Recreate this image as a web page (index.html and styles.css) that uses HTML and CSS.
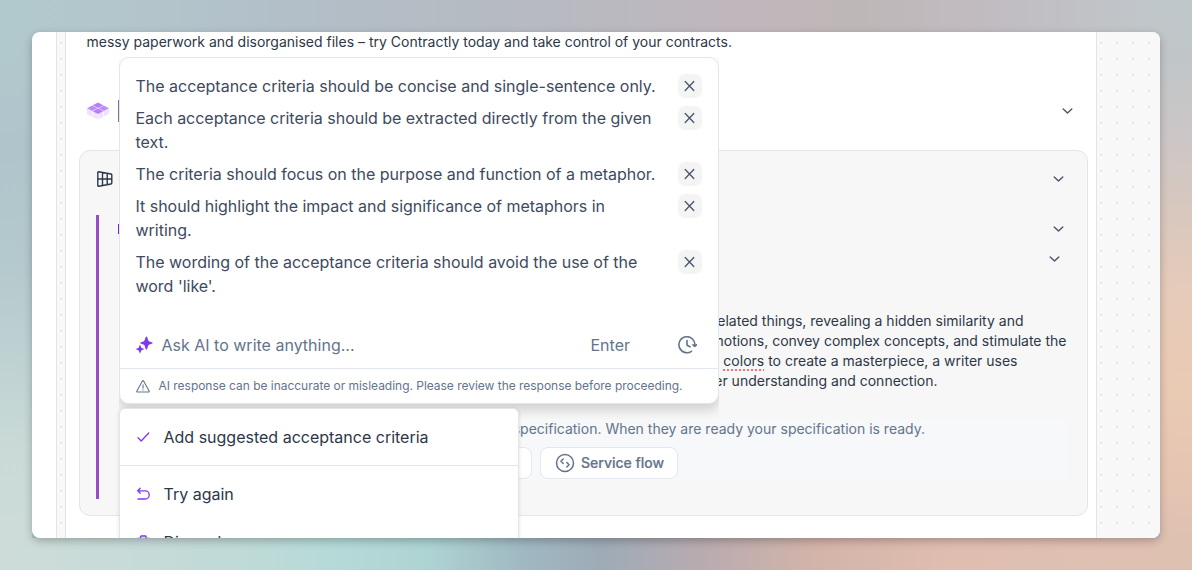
FILE: index.html
```html
<!DOCTYPE html>
<html lang="en">
<head>
<meta charset="utf-8">
<title>Acceptance criteria</title>
<link rel="stylesheet" href="styles.css">
</head>
<body>
<svg class="sprite" width="0" height="0" aria-hidden="true">
  <symbol id="chev" viewBox="0 0 12 8"><path d="M2.200 2 6.500 6l4.300-4" fill="none" stroke="currentColor" stroke-width="1.400" stroke-linecap="round" stroke-linejoin="round"/></symbol>
  <symbol id="close" viewBox="0 0 24 24"><path d="M7.200 7.500l8.600 9M15.800 7.500l-8.600 9" fill="none" stroke="currentColor" stroke-width="1.300" stroke-linecap="round"/></symbol>
</svg>
<div class="window">
  <div class="gutter"></div>
  <div class="dots dots-left"></div>
  <main class="page">
    <p class="intro">messy paperwork and disorganised files – try Contractly today and take control of your contracts.</p>
    <div class="heading-row">
      <svg width="22" height="18" viewBox="0 0 22 18">
        <path d="M0 6.500 11 12v5.500L0 12zM22 6.500 11 12v5.500L22 12z" fill="#eee2fe"/>
        <path d="M5.500 9.300v5.400M16.500 9.300v5.400M11 12v5.500" stroke="#fff" stroke-width=".8"/>
        <path d="M11 .5 16.300 3.300 11 6.100 5.700 3.300zM11 6.500l5.300 2.800L11 12 5.700 9.300z" fill="#b57ff8"/>
        <path d="M5.300 3.500 10.600 6.300 5.300 9.100 0 6.300zM16.700 3.500 22 6.300l-5.300 2.800-5.300-2.800z" fill="#bd8cf9"/>
      </svg>
      <span class="caret"></span>
      <svg class="chev" width="12" height="8"><use href="#chev"/></svg>
    </div>
    <section class="card">
      <div class="card-head">
        <svg class="window-icon" width="16" height="16" viewBox="0 0 16 16" fill="none" stroke="#2d3748" stroke-width="1.400" stroke-linejoin="round"><path d="M1.600.8 14 3q.8.200.8.900v8.200q0 .8-.8.900L1.600 15.200q-.8 0-.8-.8V1.600q0-.8.8-.8zM5.500 1.500v13M10.200 2.300v11.400M.8 8h14"/></svg>
        <svg class="chev" width="12" height="8"><use href="#chev"/></svg>
      </div>
      <div class="criteria">
        <div class="sub-row"><span class="tag"></span><svg class="chev" width="12" height="8"><use href="#chev"/></svg></div>
        <div class="sub-row nested"><svg class="chev" width="12" height="8"><use href="#chev"/></svg></div>
        <div class="desc">
          <div class="l1">related things, revealing a hidden similarity and</div>
          <div class="l2">emotions, convey complex concepts, and stimulate the</div>
          <div class="l3"><span class="misspelt">colors</span> to create a masterpiece, a writer uses</div>
          <div class="l4">deeper understanding and connection.</div>
        </div>
        <div class="ready">
          <p>specification. When they are ready your specification is ready.</p>
          <div class="buttons">
            <span class="btn btn-hidden"></span>
            <span class="btn"><svg width="20" height="20" viewBox="0 0 20 20" fill="none" stroke="#64748b" stroke-width="1.500" stroke-linecap="round" stroke-linejoin="round"><circle cx="10" cy="10" r="8.500"/><path d="M8.200 6 5.900 8.300l2.300 2.200M11.800 9.500l2.300 2.300-2.300 2.200"/></svg>Service flow</span>
          </div>
        </div>
      </div>
    </section>
  </main>
  <div class="dots dots-right"></div>

  <div class="prompt-layer">
    <div class="prompt">
      <ul class="rules">
        <li><span>The acceptance criteria should be concise and single-sentence only.</span><svg class="x" width="24" height="24"><use href="#close"/></svg></li>
        <li><span>Each acceptance criteria should be extracted directly from the given<br>text.</span><svg class="x" width="24" height="24"><use href="#close"/></svg></li>
        <li><span>The criteria should focus on the purpose and function of a metaphor.</span><svg class="x" width="24" height="24"><use href="#close"/></svg></li>
        <li><span>It should highlight the impact and significance of metaphors in<br>writing.</span><svg class="x" width="24" height="24"><use href="#close"/></svg></li>
        <li><span>The wording of the acceptance criteria should avoid the use of the<br>word 'like'.</span><svg class="x" width="24" height="24"><use href="#close"/></svg></li>
      </ul>
      <div class="ask">
        <svg width="18" height="18" viewBox="0 0 18 18" fill="#7c3aed"><path d="M11.400.5Q11.900.5 12.100 1l1.200 3.600q.2.400.6.600l3.300 1.200q.5.200.5.600t-.5.600l-3.300 1.200q-.4.200-.6.600L12.100 13q-.2.500-.7.500t-.7-.5L9.500 9.400q-.2-.4-.6-.6L5.600 7.600q-.5-.2-.5-.6t.5-.6l3.300-1.200q.4-.2.600-.6L10.700 1q.2-.5.700-.5zM5 8.500l1.200 3q.1.300.4.400l2.900 1.200-2.900 1.200q-.3.100-.4.400l-1.200 3-1.200-3q-.1-.3-.4-.4L.5 13.100l2.900-1.200q.3-.1.400-.4z"/></svg>
        <span class="placeholder">Ask AI to write anything...</span>
        <span class="enter">Enter</span>
        <svg width="19" height="18" viewBox="0 0 19 18" fill="none" stroke="#64748b" stroke-width="1.600" stroke-linecap="round" stroke-linejoin="round"><path d="M13.500 15.300A8 8 0 1 1 16.900 9.500M15 8.800l1.800 1.700 1.800-1.700M9 4.500v4.700l3 1.600"/></svg>
      </div>
      <div class="warning">
        <svg width="14" height="13" viewBox="0 0 14 13" fill="none" stroke="#64748b" stroke-width="1.100" stroke-linecap="round" stroke-linejoin="round"><path d="M6.400 1.100q.6-1 1.200 0l5.500 9.800q.5 1.100-.6 1.100h-11q-1.100 0-.6-1.100zM7 4.700v3.400M7 9.800v.1"/></svg>
        <span>AI response can be inaccurate or misleading. Please review the response before proceeding.</span>
      </div>
    </div>
  </div>
  <div class="menu">
    <div class="item first"><svg width="14" height="14" viewBox="0 0 14 14"><path d="M2 7.800 5.200 11 12.700 3" fill="none" stroke="#7c3aed" stroke-width="1.300" stroke-linecap="round" stroke-linejoin="round"/></svg>Add suggested acceptance criteria</div>
    <div class="item again"><svg width="14" height="14" viewBox="0 0 14 14"><path d="M4.200 1.300 1.700 3.800l2.500 2.500M1.800 3.800H9.100a4.100 4.100 0 0 1 0 8.200H2" fill="none" stroke="#7c3aed" stroke-width="1.300" stroke-linecap="round" stroke-linejoin="round"/></svg>Try again</div>
    <div class="item discard"><svg width="14" height="14" viewBox="0 0 14 14"><path d="M1.300 3.300h12M4.500 3V1.800q0-.8.800-.8h4q.8 0 .8.800V3M2.800 3.500l.6 9.500h7.800l.6-9.500" fill="none" stroke="#7c3aed" stroke-width="1.300" stroke-linecap="round"/></svg>Discard</div>
  </div>
</div>
</body>
</html>
```

FILE: styles.css
```css
* { box-sizing: border-box; margin: 0; padding: 0; }
body {
  width: 1192px; height: 570px; overflow: hidden; padding: 32px;
  font-family: Inter, "Liberation Sans", sans-serif; font-size: 14px; line-height: 20px; color: #2d3748;
  background:
    linear-gradient(90deg, #cddcd9 0, #c8dbd8 110px, #c0dad7 230px, #b6dad8 330px, #aed3d3 430px, #a0b9c2 520px, #9eabb7 600px, #b8abb0 700px, #d4b4a9 820px, #dfbeb0 950px, #dfc1b2 1192px) 0 538px / 1192px 32px no-repeat,
    linear-gradient(180deg, #c0c7ca 0, #c0c6c8 60px, #cdc6c6 140px, #d9c8bd 215px, #e7cbb9 300px, #e9cab3 390px, #e5c5b2 480px, #dfc1b2 538px) 1160px 0 / 32px 538px no-repeat,
    linear-gradient(180deg, #b1c9cd 0, #b0c5cb 150px, #b4c9cd 260px, #c9dad7 450px, #cddcd9 538px) 0 0 / 32px 538px no-repeat,
    linear-gradient(90deg, #b1c9cd 0, #b3c5cb 150px, #b2bec8 300px, #b5bbc2 480px, #bbb8bf 640px, #c0b7bc 740px, #beb7b7 850px, #c1babf 960px, #c0c7ca 1160px);
}
body::before { content: ""; position: absolute; left: 32px; top: 32px; width: 1128px; height: 506px; border-radius: 8px; box-shadow: 0 3px 8px rgba(0,0,0,.25); }
.sprite { position: absolute; }
.window { position: relative; display: flex; width: 1128px; height: 506px; border-radius: 8px; overflow: hidden; background: #fff; }
.gutter { width: 24px; }
.dots { background: conic-gradient(from 270deg at 2px 2px, #e5e6e8 25%, transparent 0) 3px 10px / 16px 16px #f8f8f8; border-left: 1px solid #e2e4e9; }
.dots-left { width: 10px; border-right: 1px solid #e2e4e9; }
.dots-right { width: 64px; }
.page { width: 1030px; padding: 0 8px 0 13px; }
.intro { padding-left: 7.500px; height: 20px; }
.heading-row { display: flex; align-items: center; height: 98px; padding: 20px 15px 0 8px; }
.caret { width: 1px; height: 22px; margin-left: 9px; background: #707b8c; }
.chev { color: #475569; margin-left: auto; display: block; }
.card { height: 366px; border: 1px solid #e2e5ea; border-radius: 11px; background: #f7f7f7; padding: 20px 16px; }
.card-head { display: flex; align-items: center; height: 16px; padding-right: 7px; }
.window-icon { margin-left: 1px; }
.criteria { height: 284px; margin-top: 28px; border-left: 3px solid #974dca; padding-left: 18px; }
.sub-row { display: flex; align-items: center; height: 28px; padding-right: 7px; }
.sub-row.nested { height: 32px; padding-right: 11px; }
.tag { width: 12px; height: 10px; border-left: 2px solid #6d28d9; margin-left: 1px; }
.desc { margin-top: 36px; text-align: right; white-space: nowrap; padding-right: 4.500px; }
.l1 { padding-right: 43px; }
.l3 { padding-right: 49px; }
.l4 { padding-right: 129px; }
.misspelt { text-decoration: underline dotted #f87171 2px; text-underline-offset: 3px; }
.ready { margin: 28px 4px 0 0; height: 62px; background: #f6f8fa; }
.ready p { text-align: right; padding-right: 142px; color: #64748b; }
.buttons { display: flex; gap: 8px; margin-top: 8px; }
.btn { display: flex; align-items: center; gap: 6px; height: 32px; width: 138px; padding-left: 14px; border: 1px solid #e2e8f0; border-radius: 8px; background: #fff; color: #64748b; font-weight: 500; -webkit-text-stroke: .2px #64748b; }
.btn-hidden { width: 132px; margin-left: 283px; }
.prompt-layer { position: absolute; left: 87px; top: 25px; width: 600px; height: 381px; overflow: hidden; }
.prompt { height: 347px; border: 1px solid #e2e5ea; border-radius: 10px; background: #fff; box-shadow: 0 6px 12px rgba(0,0,0,.16); }
.rules { list-style: none; display: flex; flex-direction: column; gap: 8px; padding: 16px 16px 0 15.500px; height: 264px; font-size: 16px; line-height: 24px; letter-spacing: -.015px; color: #3d4a60; }
.rules li { display: flex; justify-content: space-between; white-space: nowrap; }
.x { background: #f4f4f5; border-radius: 7px; color: #475569; }
.ask { display: flex; align-items: center; height: 46px; padding: 0 21px 0 15px; font-size: 16px; color: #64748b; }
.placeholder { margin-left: 8.500px; }
.enter { margin-left: auto; margin-right: 48px; }
.warning { display: flex; align-items: center; gap: 8.500px; height: 35px; border-top: 1px solid #e2e8f0; padding-left: 16px; font-size: 12px; letter-spacing: -.025px; color: #64748b; white-space: nowrap; }
.menu { position: absolute; left: 87px; top: 376px; width: 400px; height: 160px; border: 1px solid #e2e5ea; border-radius: 6px; background: #fff; box-shadow: 0 1px 4px rgba(0,0,0,.12); }
.item { display: flex; align-items: center; gap: 13.500px; height: 57px; padding-left: 16px; font-size: 16px; }
.first { border-bottom: 1px solid #e2e5ea; }
.again { height: 56px; }
.discard { height: 40px; }
```
